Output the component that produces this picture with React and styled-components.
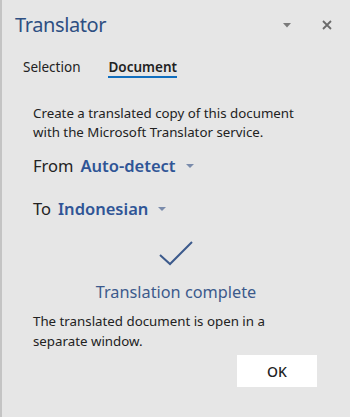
import styled, { createGlobalStyle } from 'styled-components';

const GlobalStyle = createGlobalStyle`
  html, body {
    margin: 0;
    padding: 0;
    background: #e6e6e6;
  }
  body {
    font-family: "Noto Sans", "Open Sans", sans-serif;
    color: #262626;
  }
`;

const Pane = styled.div`
  box-sizing: border-box;
  width: 350px;
  height: 417px;
  background: #e6e6e6;
  border-left: 2px solid #c4c4c4;
  display: flex;
  flex-direction: column;
`;

const Header = styled.div`
  display: flex;
  align-items: center;
  padding: 9px 17px 0 13px;
  height: 32px;
`;

const Title = styled.h1`
  flex: 1;
  margin: 0;
  font-size: 20px;
  letter-spacing: -0.4px;
  font-weight: 400;
  line-height: 30px;
  color: #2e4f82;
`;

const IconButton = styled.button`
  border: none;
  background: none;
  padding: 0;
  margin-left: ${p => p.gap || 0}px;
  width: 12px;
  height: 12px;
  display: flex;
  align-items: center;
  justify-content: center;
`;

const Tabs = styled.div`
  display: flex;
  gap: 28px;
  padding: 18px 0 0 21px;
`;

const Tab = styled.div`
  font-size: 13.5px;
  line-height: 16px;
  font-weight: ${p => (p.active ? 600 : 400)};
  color: #222;
  padding-bottom: 1px;
  border-bottom: 2px solid ${p => (p.active ? '#106ebe' : 'transparent')};
`;

const Body = styled.div`
  padding: 26px 0 0 31px;
  display: flex;
  flex-direction: column;
`;

const Text = styled.p`
  margin: 0;
  margin-top: ${p => p.top || 0}px;
  font-size: 13.3px;
  line-height: ${p => p.lh || 19}px;
  color: #222;
`;

const LangRow = styled.div`
  display: flex;
  align-items: center;
  font-size: 16.5px;
  line-height: 24px;
  margin-top: ${p => p.top}px;
`;

const LangLabel = styled.span`
  color: #222;
  margin-right: 7px;
`;

const LangValue = styled.span`
  color: #2f5596;
  font-weight: 600;
  margin-right: 10px;
`;

const Status = styled.div`
  display: flex;
  flex-direction: column;
  align-items: center;
  padding-top: 20px;
  margin-left: -31px;
`;

const StatusText = styled.div`
  font-size: 16.3px;
  line-height: 24px;
  color: #3c5a8c;
  margin-top: 14px;
`;

const Footer = styled.div`
  display: flex;
  justify-content: flex-end;
  padding: 4px 33px 0 0;
`;

const OkButton = styled.button`
  width: 80px;
  height: 32px;
  border: none;
  background: #fff;
  font-family: "Noto Sans", "Open Sans", sans-serif;
  font-size: 14px;
  font-weight: 500;
  color: #222;
`;

const Caret = ({ color = '#7a8bab' }) => (
  <svg width="8" height="4" viewBox="0 0 8 4">
    <path d="M0 0 H8 L4 4 Z" fill={color} />
  </svg>
);

export default function App() {
  return (
    <>
      <GlobalStyle />
      <Pane>
        <Header>
          <Title>Translator</Title>
          <IconButton>
            <svg width="8" height="5" viewBox="0 0 8 5">
              <path d="M0 0 H8 L4 4.5 Z" fill="#7a7a7a" />
            </svg>
          </IconButton>
          <IconButton gap={28}>
            <svg width="10" height="10" viewBox="0 0 10 10">
              <path d="M1 1 L9 9 M9 1 L1 9" stroke="#6a6a6a" strokeWidth="1.8" />
            </svg>
          </IconButton>
        </Header>
        <Tabs>
          <Tab>Selection</Tab>
          <Tab active>Document</Tab>
        </Tabs>
        <Body>
          <Text>
            Create a translated copy of this document
            <br />
            with the Microsoft Translator service.
          </Text>
          <LangRow top={12}>
            <LangLabel>From</LangLabel>
            <LangValue>Auto-detect</LangValue>
            <Caret />
          </LangRow>
          <LangRow top={19}>
            <LangLabel>To</LangLabel>
            <LangValue>Indonesian</LangValue>
            <Caret />
          </LangRow>
          <Status>
            <svg width="34" height="25" viewBox="0 0 34 25">
              <path d="M1 14 L11 23 L33 1" fill="none" stroke="#3c5a8c" strokeWidth="2" />
            </svg>
            <StatusText>Translation complete</StatusText>
          </Status>
          <Text top={7} lh={20}>
            The translated document is open in a
            <br />
            separate window.
          </Text>
        </Body>
        <Footer>
          <OkButton>OK</OkButton>
        </Footer>
      </Pane>
    </>
  );
}
